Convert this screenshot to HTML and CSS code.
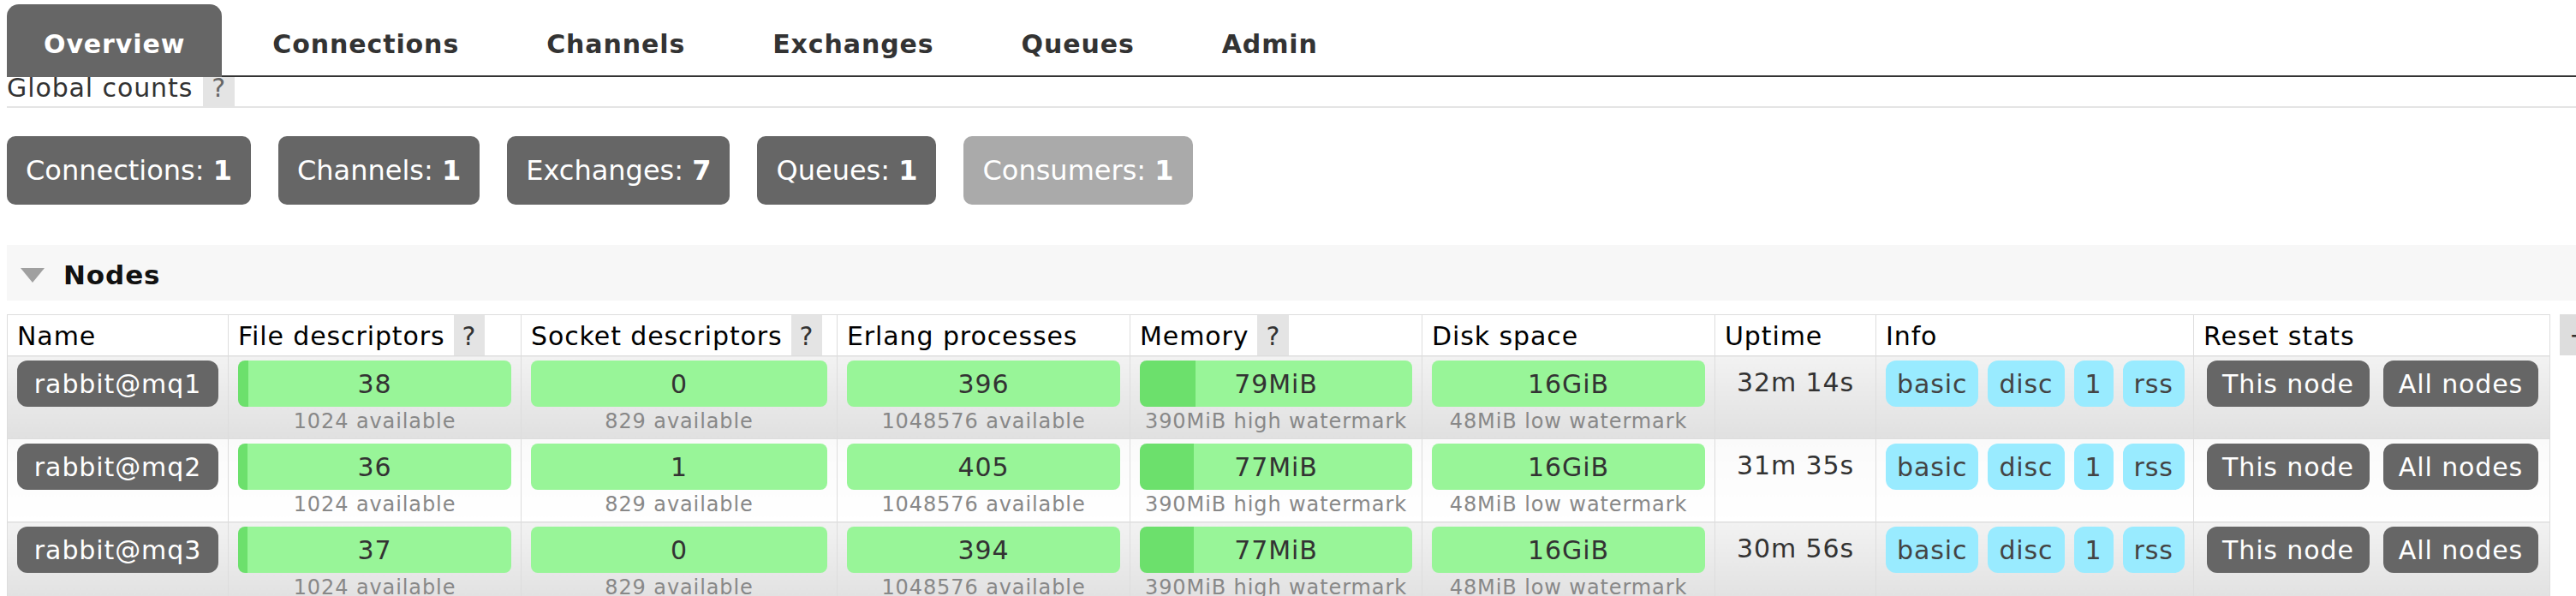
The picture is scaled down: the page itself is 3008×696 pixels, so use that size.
FILE: index.html
```html
<!DOCTYPE html>
<html>
<head>
<meta charset="utf-8">
<title>RabbitMQ Management</title>
<link rel="stylesheet" href="styles.css">
</head>
<body>
<nav class="menu">
  <a class="tab active">Overview</a>
  <a class="tab">Connections</a>
  <a class="tab">Channels</a>
  <a class="tab">Exchanges</a>
  <a class="tab">Queues</a>
  <a class="tab">Admin</a>
</nav>

<h3 class="section-title"><span class="title-text">Global counts</span><span class="help">?</span></h3>

<div class="counts">
  <div class="count">Connections: <b>1</b></div>
  <div class="count">Channels: <b>1</b></div>
  <div class="count">Exchanges: <b>7</b></div>
  <div class="count">Queues: <b>1</b></div>
  <div class="count faded">Consumers: <b>1</b></div>
</div>

<div class="section-head"><span class="arrow"></span><span class="section-name">Nodes</span></div>

<div class="nodes">
  <table class="list">
    <colgroup>
      <col class="c-name">
      <col class="c-fd">
      <col class="c-sock">
      <col class="c-erl">
      <col class="c-mem">
      <col class="c-disk">
      <col class="c-up">
      <col class="c-info">
      <col class="c-reset">
    </colgroup>
    <thead>
      <tr>
        <th><div class="th-inner"><span class="th-text">Name</span></div></th>
        <th><div class="th-inner"><span class="th-text">File descriptors</span><span class="th-help">?</span></div></th>
        <th><div class="th-inner"><span class="th-text">Socket descriptors</span><span class="th-help">?</span></div></th>
        <th><div class="th-inner"><span class="th-text">Erlang processes</span></div></th>
        <th><div class="th-inner"><span class="th-text">Memory</span><span class="th-help">?</span></div></th>
        <th><div class="th-inner"><span class="th-text">Disk space</span></div></th>
        <th><div class="th-inner"><span class="th-text">Uptime</span></div></th>
        <th><div class="th-inner"><span class="th-text">Info</span></div></th>
        <th><div class="th-inner"><span class="th-text">Reset stats</span></div></th>
      </tr>
    </thead>
    <tbody>
      <tr class="alt1">
        <td><span class="label">rabbit@mq1</span></td>
        <td><div class="bar" style="--p: 3.7%">38</div><span class="sub">1024 available</span></td>
        <td><div class="bar" style="--p: 0%">0</div><span class="sub">829 available</span></td>
        <td><div class="bar" style="--p: 0.04%">396</div><span class="sub">1048576 available</span></td>
        <td><div class="bar" style="--p: 20.3%">79MiB</div><span class="sub">390MiB high watermark</span></td>
        <td><div class="bar" style="--p: 0%">16GiB</div><span class="sub">48MiB low watermark</span></td>
        <td class="uptime">32m 14s</td>
        <td><div class="badges"><span class="badge">basic</span><span class="badge">disc</span><span class="badge">1</span><span class="badge">rss</span></div></td>
        <td class="reset"><div class="buttons"><span class="btn">This node</span><span class="btn">All nodes</span></div></td>
      </tr>
      <tr class="alt2">
        <td><span class="label">rabbit@mq2</span></td>
        <td><div class="bar" style="--p: 3.5%">36</div><span class="sub">1024 available</span></td>
        <td><div class="bar" style="--p: 0.12%">1</div><span class="sub">829 available</span></td>
        <td><div class="bar" style="--p: 0.04%">405</div><span class="sub">1048576 available</span></td>
        <td><div class="bar" style="--p: 19.7%">77MiB</div><span class="sub">390MiB high watermark</span></td>
        <td><div class="bar" style="--p: 0%">16GiB</div><span class="sub">48MiB low watermark</span></td>
        <td class="uptime">31m 35s</td>
        <td><div class="badges"><span class="badge">basic</span><span class="badge">disc</span><span class="badge">1</span><span class="badge">rss</span></div></td>
        <td class="reset"><div class="buttons"><span class="btn">This node</span><span class="btn">All nodes</span></div></td>
      </tr>
      <tr class="alt1">
        <td><span class="label">rabbit@mq3</span></td>
        <td><div class="bar" style="--p: 3.6%">37</div><span class="sub">1024 available</span></td>
        <td><div class="bar" style="--p: 0%">0</div><span class="sub">829 available</span></td>
        <td><div class="bar" style="--p: 0.04%">394</div><span class="sub">1048576 available</span></td>
        <td><div class="bar" style="--p: 19.7%">77MiB</div><span class="sub">390MiB high watermark</span></td>
        <td><div class="bar" style="--p: 0%">16GiB</div><span class="sub">48MiB low watermark</span></td>
        <td class="uptime">30m 56s</td>
        <td><div class="badges"><span class="badge">basic</span><span class="badge">disc</span><span class="badge">1</span><span class="badge">rss</span></div></td>
        <td class="reset"><div class="buttons"><span class="btn">This node</span><span class="btn">All nodes</span></div></td>
      </tr>
    </tbody>
  </table>
  <span class="plusminus">+/-</span>
</div>
</body>
</html>
```

FILE: styles.css
```css
html, body {
  overflow: hidden;
}

body {
  margin: 5px 0 0 8px;
  font-family: Verdana, "DejaVu Sans", sans-serif;
  font-size: 30px;
  letter-spacing: 0.03em;
  color: #333;
  background: #fff;
}

/* ---------- top menu ---------- */
.menu {
  display: flex;
  gap: 16px;
  height: 83px;
  border-bottom: 2px solid #333;
}

.tab {
  display: block;
  box-sizing: border-box;
  height: 83px;
  padding: 29px 43px 0;
  line-height: 35px;
  font-weight: bold;
  color: #333;
  border-radius: 14px 14px 0 0;
}

.tab.active {
  height: 85px;
  margin-bottom: -2px;
  background: #666;
  color: #fff;
}

/* ---------- global counts ---------- */
.section-title {
  display: flex;
  margin: 0;
  font-size: 30px;
  font-weight: normal;
  color: #333;
  border-bottom: 2px solid #e4e4e4;
}

.title-text {
  line-height: 26px;
  padding-bottom: 8px;
}

.help {
  line-height: 26px;
  padding: 0 10px 8px;
  margin-left: 12px;
  background: #e4e4e4;
  color: #666;
}

.counts {
  display: flex;
  gap: 32px;
  margin-top: 33px;
}

.count {
  padding: 21px 22px;
  font-size: 32px;
  line-height: 38px;
  letter-spacing: 0;
  color: #fff;
  background: #666;
  border-radius: 10px;
}

.count.faded {
  background: #aaa;
}

/* ---------- nodes section ---------- */
.section-head {
  display: flex;
  align-items: center;
  box-sizing: border-box;
  height: 65px;
  margin-top: 47px;
  padding: 5px 0 0 16px;
  background: #f7f7f7;
}

.arrow {
  width: 0;
  height: 0;
  border-left: 14px solid transparent;
  border-right: 14px solid transparent;
  border-top: 17px solid #a0a0a0;
  margin-right: 22px;
}

.section-name {
  font-size: 31px;
  font-weight: bold;
  color: #111;
}

.nodes {
  display: flex;
  align-items: flex-start;
  gap: 11px;
  margin-top: 16px;
}

table.list {
  flex-shrink: 0;
  width: 2969px;
  table-layout: fixed;
  border-collapse: collapse;
}

.c-name { width: 258px; }
.c-fd { width: 342px; }
.c-sock { width: 369px; }
.c-erl { width: 342px; }
.c-mem { width: 341px; }
.c-disk { width: 342px; }
.c-up { width: 188px; }
.c-info { width: 371px; }
.c-reset { width: 416px; }

table.list th {
  height: 47px;
  padding: 0 11px;
  text-align: left;
  vertical-align: top;
  font-weight: normal;
  color: #000;
  background: #fff;
  border: 1px solid #ddd;
}

.th-inner {
  display: flex;
  height: 47px;
  white-space: nowrap;
}

.th-text {
  padding-top: 2px;
  line-height: 45px;
}

.th-help {
  padding: 2px 10px 0;
  margin-left: 10px;
  line-height: 45px;
  background: #e4e4e4;
  color: #333;
}

table.list td {
  padding: 5px 11px 2px;
  vertical-align: top;
  border: 1px solid #ddd;
  white-space: nowrap;
}

tr.alt1 td {
  background: linear-gradient(#f2f2f2, #e0e0e0);
}

tr.alt2 td {
  background: linear-gradient(#fafafa, #fff);
}

.label {
  display: block;
  box-sizing: border-box;
  height: 54px;
  padding-top: 2px;
  line-height: 52px;
  text-align: center;
  color: #fff;
  background: #666;
  border-radius: 12px;
}

.bar {
  box-sizing: border-box;
  height: 54px;
  padding-top: 2px;
  line-height: 52px;
  text-align: center;
  color: #333;
  border-radius: 8px;
  background: linear-gradient(to right, #6ce06c var(--p), #98f598 var(--p));
}

.sub {
  display: block;
  font-size: 24px;
  line-height: 35px;
  text-align: center;
  color: #888;
}

td.uptime {
  padding-top: 7px;
  line-height: 52px;
  text-align: center;
  color: #333;
}

.badges {
  display: flex;
  gap: 11px;
}

.badge {
  box-sizing: border-box;
  height: 54px;
  padding: 2px 13px 0;
  line-height: 52px;
  color: #444;
  background: #99ebff;
  border-radius: 12px;
}

table.list td.reset {
  padding-left: 15px;
}

.buttons {
  display: flex;
  gap: 16px;
}

.btn {
  box-sizing: border-box;
  height: 54px;
  padding: 2px 18px 0;
  line-height: 52px;
  color: #fff;
  background: #666;
  border-radius: 12px;
}

.plusminus {
  flex-shrink: 0;
  box-sizing: border-box;
  width: 60px;
  height: 48px;
  padding: 2px 0 0 11px;
  line-height: 45px;
  white-space: nowrap;
  background: #ddd;
  color: #333;
}
```
